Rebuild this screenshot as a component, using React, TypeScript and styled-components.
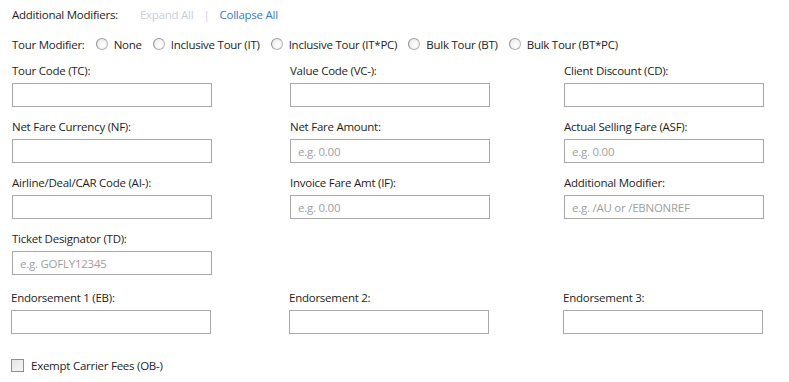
import React from 'react';
import styled, { createGlobalStyle } from 'styled-components';

const GlobalStyle = createGlobalStyle`
  html, body {
    margin: 0;
    padding: 0;
    background: #ffffff;
  }
  body {
    font-family: "Open Sans", "Liberation Sans", sans-serif;
    font-size: 11.5px;
    letter-spacing: -0.25px;
    color: #1e1e1e;
  }
`;

const Container = styled.div`
  width: 789px;
  height: 382px;
  padding: 6px 0 0 12px;
  box-sizing: border-box;
`;

const HeaderRow = styled.div`
  display: flex;
  align-items: center;
  height: 17px;
`;

const HeaderTitle = styled.span`
  margin-right: 22px;
`;

const HeaderLink = styled.span<{ disabled?: boolean }>`
  color: ${props => props.disabled ? '#c6d0db' : '#3c7cc6'};
  cursor: ${props => props.disabled ? 'default' : 'pointer'};
`;

const Divider = styled.span`
  color: #c6d0db;
  margin: 0 10px;
`;

const TourRow = styled.div`
  display: flex;
  align-items: center;
  margin-top: 13px;
  height: 16px;
`;

const TourLabel = styled.span`
  margin-right: 11px;
`;

const RadioOption = styled.label`
  display: flex;
  align-items: center;
  margin-right: 11px;
`;

const RadioCircle = styled.span`
  width: 10px;
  height: 10px;
  border-radius: 50%;
  border: 1px solid #b4b4b4;
  border-left-color: #8c8c8c;
  border-top-color: #9a9a9a;
  background: radial-gradient(circle at 60% 60%, #ffffff 0%, #f2f2f2 55%, #e2e2e2 100%);
  margin-right: 6px;
  box-sizing: content-box;
`;

const FieldGrid = styled.div<{ shift?: number }>`
  display: grid;
  grid-template-columns: 278px 274px 200px;
  margin-left: ${props => props.shift || 0}px;
`;

const Field = styled.div`
  display: flex;
  flex-direction: column;
  height: 56px;
  padding-top: 6px;
  box-sizing: border-box;
`;

const FieldLabel = styled.span`
  height: 17px;
  line-height: 17px;
  margin-bottom: 4px;
`;

const TextInput = styled.input`
  width: 200px;
  height: 24px;
  box-sizing: border-box;
  border: 1px solid #a9a9a9;
  padding: 0 7px;
  font-family: inherit;
  font-size: 11.5px;
  letter-spacing: -0.25px;
  color: #1e1e1e;
  outline: none;
  background: #fff;

  &::placeholder {
    color: #a0a0a0;
  }
`;

const Fields = styled.div`
  margin-top: 4px;
`;

const EndorseBlock = styled.div`
  margin-top: 3px;
`;

const CheckRow = styled.label`
  display: flex;
  align-items: center;
  margin-top: 19px;
  margin-left: -1px;
`;

const CheckBox = styled.span`
  width: 11px;
  height: 11px;
  border: 1px solid #8e8e8e;
  background: linear-gradient(135deg, #e6e6e6 0%, #f6f6f6 100%);
  margin-right: 7px;
  box-sizing: content-box;
`;

const tourOptions = [
  'None',
  'Inclusive Tour (IT)',
  'Inclusive Tour (IT*PC)',
  'Bulk Tour (BT)',
  'Bulk Tour (BT*PC)',
];

interface FieldDef {
  label: string;
  placeholder?: string;
}

const rows: (FieldDef | null)[][] = [
  [
    { label: 'Tour Code (TC):' },
    { label: 'Value Code (VC-):' },
    { label: 'Client Discount (CD):' },
  ],
  [
    { label: 'Net Fare Currency (NF):' },
    { label: 'Net Fare Amount:', placeholder: 'e.g. 0.00' },
    { label: 'Actual Selling Fare (ASF):', placeholder: 'e.g. 0.00' },
  ],
  [
    { label: 'Airline/Deal/CAR Code (AI-):' },
    { label: 'Invoice Fare Amt (IF):', placeholder: 'e.g. 0.00' },
    { label: 'Additional Modifier:', placeholder: 'e.g. /AU or /EBNONREF' },
  ],
  [
    { label: 'Ticket Designator (TD):', placeholder: 'e.g. GOFLY12345' },
    null,
    null,
  ],
];

const endorsements: FieldDef[] = [
  { label: 'Endorsement 1 (EB):' },
  { label: 'Endorsement 2:' },
  { label: 'Endorsement 3:' },
];

const renderField = (f: FieldDef | null, i: number) =>
  f ? (
    <Field key={i}>
      <FieldLabel>{f.label}</FieldLabel>
      <TextInput type="text" placeholder={f.placeholder} />
    </Field>
  ) : (
    <div key={i} />
  );

const App: React.FC = () => {
  return (
    <Container>
      <GlobalStyle />
      <HeaderRow>
        <HeaderTitle>Additional Modifiers:</HeaderTitle>
        <HeaderLink disabled>Expand All</HeaderLink>
        <Divider>|</Divider>
        <HeaderLink>Collapse All</HeaderLink>
      </HeaderRow>

      <TourRow>
        <TourLabel>Tour Modifier:</TourLabel>
        {tourOptions.map(opt => (
          <RadioOption key={opt}>
            <RadioCircle />
            {opt}
          </RadioOption>
        ))}
      </TourRow>

      <Fields>
        {rows.map((row, r) => (
          <FieldGrid key={r}>{row.map(renderField)}</FieldGrid>
        ))}
      </Fields>

      <EndorseBlock>
        <FieldGrid shift={-1}>{endorsements.map(renderField)}</FieldGrid>
      </EndorseBlock>

      <CheckRow>
        <CheckBox />
        Exempt Carrier Fees (OB-)
      </CheckRow>
    </Container>
  );
};

export default App;
